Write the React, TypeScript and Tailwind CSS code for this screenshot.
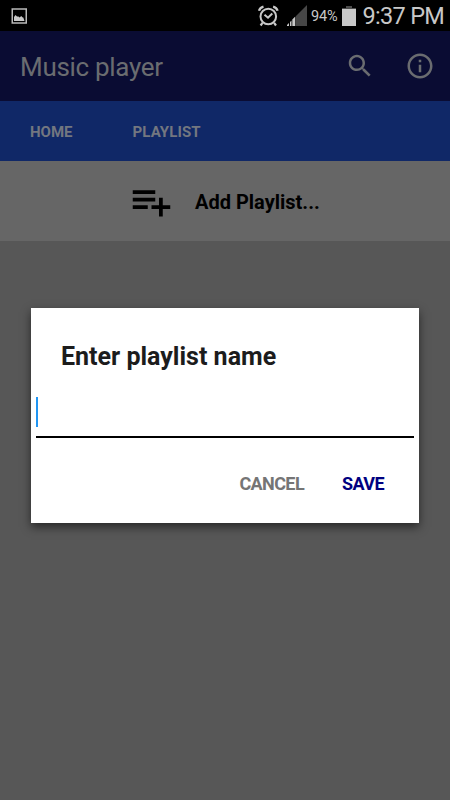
import React from "react";

const StatusBar: React.FC = () => (
  <div className="h-[31px] shrink-0 bg-black flex items-center text-[#c8c8c8]">
    {/* Screenshot notification */}
    <svg width="16" height="16" viewBox="0 0 16 16" className="ml-[11px] mt-px">
      <rect x="1.250" y="1" width="14" height="14" fill="none" stroke="#b9b9b9" strokeWidth="1.500" />
      <path d="M3 13V9l1.500-2 1.500 1.500L7.500 8.500l1 1 1.800-1.500 1 1.200 1 .3 1.200 3.500z" fill="#c8c8c8" />
    </svg>

    {/* Alarm */}
    <svg width="22" height="22" viewBox="0 0 22 22" fill="none" stroke="currentColor" className="ml-[230px]">
      <circle cx="11.300" cy="11.500" r="7.800" strokeWidth="2" />
      <path d="M7.500 9.700l3.500 3 4.300-4.200" strokeWidth="2" />
      <path d="M2 5.800C2.600 3.700 4.200 2.200 6.500 1.600M20.600 5.800C20 3.700 18.400 2.200 16.100 1.600" strokeWidth="2.300" />
      <path d="M5.500 17.800l-1.900 2.700M17.100 17.800l1.900 2.700" strokeWidth="2.200" />
    </svg>

    {/* Signal */}
    <svg width="20" height="21" viewBox="0 0 20 21" className="ml-2">
      <path d="M9 11L20 0v21H9z" fill="#474747" />
      <path d="M0 21v-1l2-2v3zM3 21v-4l1.500-1.500V21zM5.300 21v-6.500L8.300 11.500V21z" fill="#c8c8c8" />
    </svg>

    <span className="ml-[4px] mt-[3px] w-[31px] text-[14.500px] leading-none tracking-[-0.1px] whitespace-nowrap">94%</span>

    {/* Battery */}
    <svg width="14" height="20" viewBox="0 0 14 20">
      <path d="M4 0h6v2h4v2H0V2h4z" fill="#4c4c4c" />
      <path d="M0 3h14v17H0z" fill="#c8c8c8" />
    </svg>

    <span className="ml-[6.500px] mt-[2px] text-[23.500px] leading-none tracking-[-0.7px] whitespace-nowrap">9:37 PM</span>
  </div>
);

const Toolbar: React.FC = () => (
  <header className="h-[70px] shrink-0 bg-[#0a0c33] text-[#6a6c70] flex items-center pl-5 pr-[15px]">
    <h1 className="flex-1 text-[26px] leading-none tracking-[-0.3px] mt-px">Music player</h1>
    <div className="flex gap-[30px]">
      <button aria-label="Search">
        <svg width="30" height="30" viewBox="0 0 24 24" fill="currentColor">
          <path d="M15.500 14h-.79l-.28-.27C15.410 12.590 16 11.110 16 9.500 16 5.910 13.090 3 9.500 3S3 5.910 3 9.500 5.910 16 9.500 16c1.610 0 3.090-.59 4.230-1.570l.27.28v.79l5 4.990L20.490 19l-4.990-5zm-6 0C7.010 14 5 11.990 5 9.500S7.010 5 9.500 5 14 7.010 14 9.500 11.990 14 9.500 14z" />
        </svg>
      </button>
      <button aria-label="Info">
        <svg width="30" height="30" viewBox="0 0 24 24" fill="currentColor">
          <path d="M11 7h2v2h-2zm0 4h2v6h-2zm1-9C6.480 2 2 6.480 2 12s4.480 10 10 10 10-4.480 10-10S17.520 2 12 2zm0 18c-4.410 0-8-3.590-8-8s3.590-8 8-8 8 3.590 8 8-3.590 8-8 8z" />
        </svg>
      </button>
    </div>
  </header>
);

const Tabs: React.FC = () => (
  <nav className="h-[60px] shrink-0 bg-[#102867] text-[#737780] flex items-center gap-[60px] px-[30px] pt-[2px] text-[15px] font-bold">
    <button>HOME</button>
    <button className="tracking-[0.1px]">PLAYLIST</button>
  </nav>
);

const AddPlaylistRow: React.FC = () => (
  <button className="h-20 w-full shrink-0 bg-[#666666] text-black flex items-center pl-[129px]">
    <svg width="45" height="45" viewBox="0 0 24 24" fill="currentColor">
      <path d="M14 10H2v2h12v-2zm0-4H2v2h12V6zm4 8v-4h-2v4h-4v2h4v4h2v-4h4v-2h-4zM2 16h8v-2H2v2z" />
    </svg>
    <span className="ml-[21px] mt-[2px] text-[20px] font-bold">Add Playlist...</span>
  </button>
);

const PlaylistDialog: React.FC = () => (
  <div className="absolute left-[31px] top-[308px] w-[388px] h-[215px] bg-white shadow-[0_4px_9px_0px_rgba(0,0,0,0.55)] flex flex-col">
    <h2 className="mt-[34px] ml-[30px] text-[25px] leading-[30px] font-bold text-[#1c1c1c]">Enter playlist name</h2>
    <div className="mt-[25px] mx-[5px] h-[41px] border-b-2 border-black">
      <div className="w-[2px] h-[30px] bg-[#2196f3]" />
    </div>
    <div className="mt-[34px] pr-[35px] flex justify-end gap-[38px] text-[18px] leading-6 font-bold tracking-[-0.6px]">
      <button className="text-[#757575]">CANCEL</button>
      <button className="text-[#000080]">SAVE</button>
    </div>
  </div>
);

export default function App() {
  return (
    <div className="relative w-[450px] h-[800px] overflow-hidden bg-[#575757] flex flex-col font-['Roboto',sans-serif]">
      <StatusBar />
      <Toolbar />
      <Tabs />
      <AddPlaylistRow />
      <PlaylistDialog />
    </div>
  );
}
